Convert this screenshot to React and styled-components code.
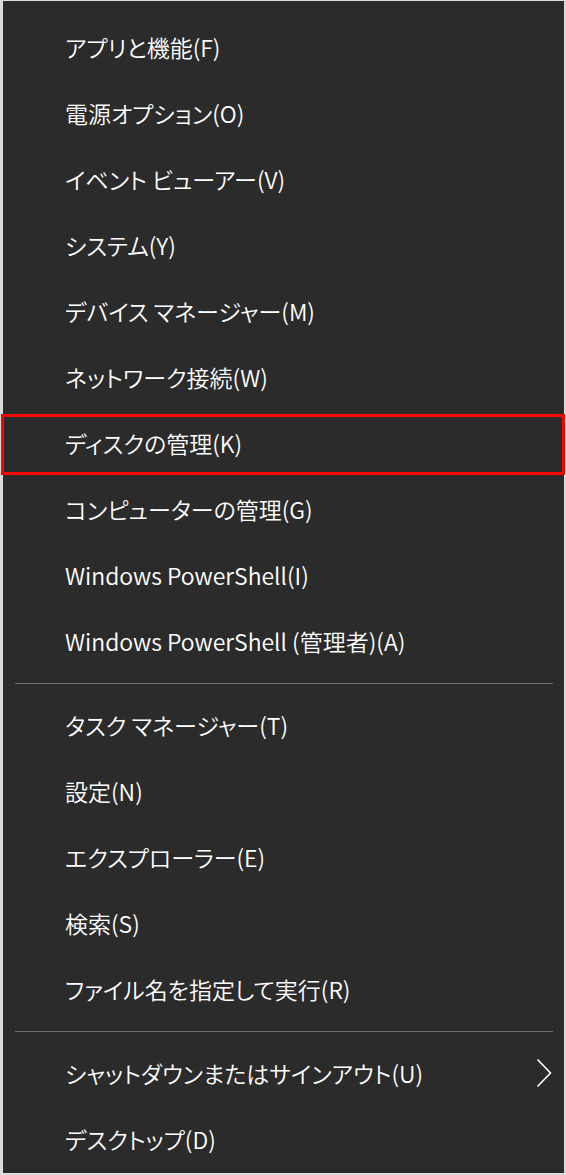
import React from 'react';
import styled, { createGlobalStyle } from 'styled-components';

const GlobalStyle = createGlobalStyle`
  html, body {
    margin: 0;
    padding: 0;
    background: #dcdcdc;
  }
  #root {
    display: flex;
  }
`;

const Menu = styled.div`
  box-sizing: border-box;
  width: 561px;
  height: 1172px;
  margin: 1px 2px 2px 3px;
  padding-top: 13px;
  background: #2b2b2b;
  display: flex;
  flex-direction: column;
  font-family: "Noto Sans CJK JP", "Noto Sans", sans-serif;
  font-feature-settings: "palt";
  font-weight: 350;
  color: #ffffff;
`;

const Row = styled.div`
  position: relative;
  box-sizing: border-box;
  height: 66px;
  padding-left: 62px;
  padding-right: 12px;
  display: flex;
  align-items: center;
  justify-content: space-between;
  font-size: 23px;
  line-height: 1;

  ${(p) =>
    p.$marked &&
    `
    &::after {
      content: "";
      position: absolute;
      left: -2px;
      right: -1px;
      top: 4px;
      bottom: 1px;
      border: 3.5px solid #ff0000;
    }
  `}
`;

const Label = styled.span`
  white-space: nowrap;
`;

const Separator = styled.div`
  height: 18px;
  display: flex;
  align-items: center;
  padding: 0 11px 0 12px;

  &::before {
    content: "";
    flex: 1;
    height: 1px;
    background: #6e6e6e;
  }
`;

const Chevron = () => (
  <svg width="16" height="30" viewBox="0 0 16 30" fill="none">
    <path d="M1.5 1.5 L14.5 15 L1.5 28.5" stroke="#ffffff" strokeWidth="1.6" />
  </svg>
);

const groups = [
  [
    'アプリと機能(F)',
    '電源オプション(O)',
    'イベント ビューアー(V)',
    'システム(Y)',
    'デバイス マネージャー(M)',
    'ネットワーク接続(W)',
    'ディスクの管理(K)',
    'コンピューターの管理(G)',
    'Windows PowerShell(I)',
    'Windows PowerShell (管理者)(A)',
  ],
  [
    'タスク マネージャー(T)',
    '設定(N)',
    'エクスプローラー(E)',
    '検索(S)',
    'ファイル名を指定して実行(R)',
  ],
  ['シャットダウンまたはサインアウト(U)', 'デスクトップ(D)'],
];

export default function App() {
  return (
    <>
      <GlobalStyle />
      <Menu>
        {groups.map((items, gi) => (
          <React.Fragment key={gi}>
            {gi > 0 && <Separator />}
            {items.map((label) => (
              <Row key={label} $marked={label === 'ディスクの管理(K)'}>
                <Label>{label}</Label>
                {label.startsWith('シャットダウン') && <Chevron />}
              </Row>
            ))}
          </React.Fragment>
        ))}
      </Menu>
    </>
  );
}
